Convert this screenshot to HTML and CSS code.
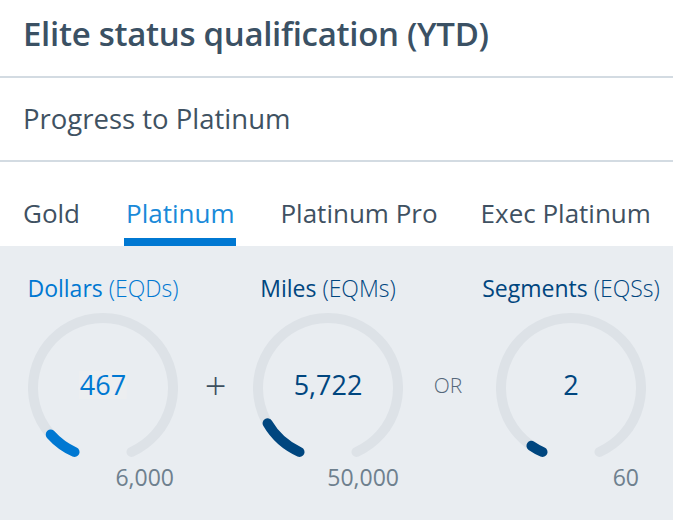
FILE: index.html
```html
<!DOCTYPE html>
<html lang="en">
<head>
<meta charset="utf-8">
<title>Elite status qualification</title>
<link rel="stylesheet" href="styles.css">
</head>
<body>
<div class="card">
  <header class="title-row">
    <h1 class="title">Elite status qualification (YTD)</h1>
  </header>
  <div class="progress-row">Progress to Platinum</div>
  <nav class="tabs">
    <span class="tab">Gold</span>
    <span class="tab active">Platinum</span>
    <span class="tab">Platinum Pro</span>
    <span class="tab last">Exec Platinum</span>
  </nav>
  <section class="gauges">
    <div class="metric dollars">
      <div class="label"><span class="name">Dollars</span> <span class="unit">(EQDs)</span></div>
      <div class="gauge">
        <svg width="150" height="150" viewBox="0 0 150 150">
          <path class="track" d="M46.53,138.95 A70,70 0 1 1 103.47,138.95"/>
          <path class="bar" d="M46.53,138.95 A70,70 0 0 1 22.74,121.57"/>
        </svg>
        <span class="value hl">467</span>
      </div>
      <div class="max">6,000</div>
    </div>
    <div class="op plus">+</div>
    <div class="metric miles">
      <div class="label"><span class="name">Miles</span> <span class="unit">(EQMs)</span></div>
      <div class="gauge">
        <svg width="150" height="150" viewBox="0 0 150 150">
          <path class="track" d="M46.53,138.95 A70,70 0 1 1 103.47,138.95"/>
          <path class="bar" d="M46.53,138.95 A70,70 0 0 1 14.56,110.32"/>
        </svg>
        <span class="value">5,722</span>
      </div>
      <div class="max">50,000</div>
    </div>
    <div class="op or">OR</div>
    <div class="metric segments">
      <div class="label"><span class="name">Segments</span> <span class="unit">(EQSs)</span></div>
      <div class="gauge">
        <svg width="150" height="150" viewBox="0 0 150 150">
          <path class="track" d="M46.53,138.95 A70,70 0 1 1 103.47,138.95"/>
          <path class="bar" d="M46.53,138.95 A70,70 0 0 1 35.45,132.76"/>
        </svg>
        <span class="value">2</span>
      </div>
      <div class="max">60</div>
    </div>
  </section>
</div>
</body>
</html>
```

FILE: styles.css
```css
* { box-sizing: border-box; }
html, body { margin: 0; padding: 0; }
body {
  width: 673px;
  height: 520px;
  overflow: hidden;
  background: #e9edf1;
  font-family: "Open Sans", "Noto Sans", sans-serif;
  color: #3d5162;
}
.card { background: #fff; }
.title-row {
  height: 78px;
  border-bottom: 2px solid #d3dbe2;
  padding: 11px 0 0 23px;
}
.title {
  margin: 0;
  font-size: 33px;
  line-height: normal;
  font-weight: 600;
  color: #3b5164;
  letter-spacing: -0.3px;
}
.progress-row {
  height: 84px;
  border-bottom: 2px solid #d3dbe2;
  padding: 22px 0 0 23px;
  font-size: 27.5px;
  color: #3f5262;
}
.tabs {
  height: 84px;
  display: flex;
  align-items: flex-end;
  padding-left: 21px;
  gap: 42px;
  background: #fff;
}
.tab {
  font-size: 26px;
  line-height: normal;
  color: #3f5162;
  padding: 0 2px 7px;
  border-bottom: 8px solid transparent;
}
.tab.last { margin-left: -3px; }
.tab.active {
  color: #1a8ad9;
  border-bottom-color: #0078d2;
}
.gauges {
  display: grid;
  grid-template-columns: 170px 55px 170px 70px 176px;
  padding: 26px 0 0 18px;
  height: 274px;
  background: #e9edf1;
}
.metric {
  display: flex;
  flex-direction: column;
  align-items: center;
}
.label {
  font-size: 23px;
  line-height: normal;
  white-space: nowrap;
  height: 41px;
}
.unit { font-weight: 300; }
.dollars .label, .dollars .value { color: #0078d2; }
.miles .label, .segments .label, .miles .value, .segments .value { color: #00467f; }
.gauge {
  position: relative;
  width: 150px;
  height: 150px;
}
.gauge svg { display: block; }
.track, .bar {
  fill: none;
  stroke-width: 10;
  stroke-linecap: round;
}
.track { stroke: #dde2e7; }
.dollars .bar { stroke: #0078d2; }
.miles .bar, .segments .bar { stroke: #00467f; }
.value {
  position: absolute;
  left: 50%;
  top: 72px;
  transform: translate(-50%, -50%);
  font-size: 27px;
  line-height: 28px;
}
.value.hl { background: #eceef0; padding: 0 1px; }
.max {
  align-self: stretch;
  text-align: right;
  font-size: 23px;
  line-height: normal;
  color: #6e808e;
  margin-top: -2px;
  padding-right: 14px;
}
.segments .max { padding-right: 20px; }
.op {
  display: flex;
  justify-content: center;
  align-items: flex-start;
  color: #3d4f5e;
}
.plus { font-size: 38px; font-weight: 300; line-height: 38px; padding-top: 94px; }
.or { font-size: 21px; font-weight: 300; line-height: normal; color: #55677a; padding-top: 99px; }
```
